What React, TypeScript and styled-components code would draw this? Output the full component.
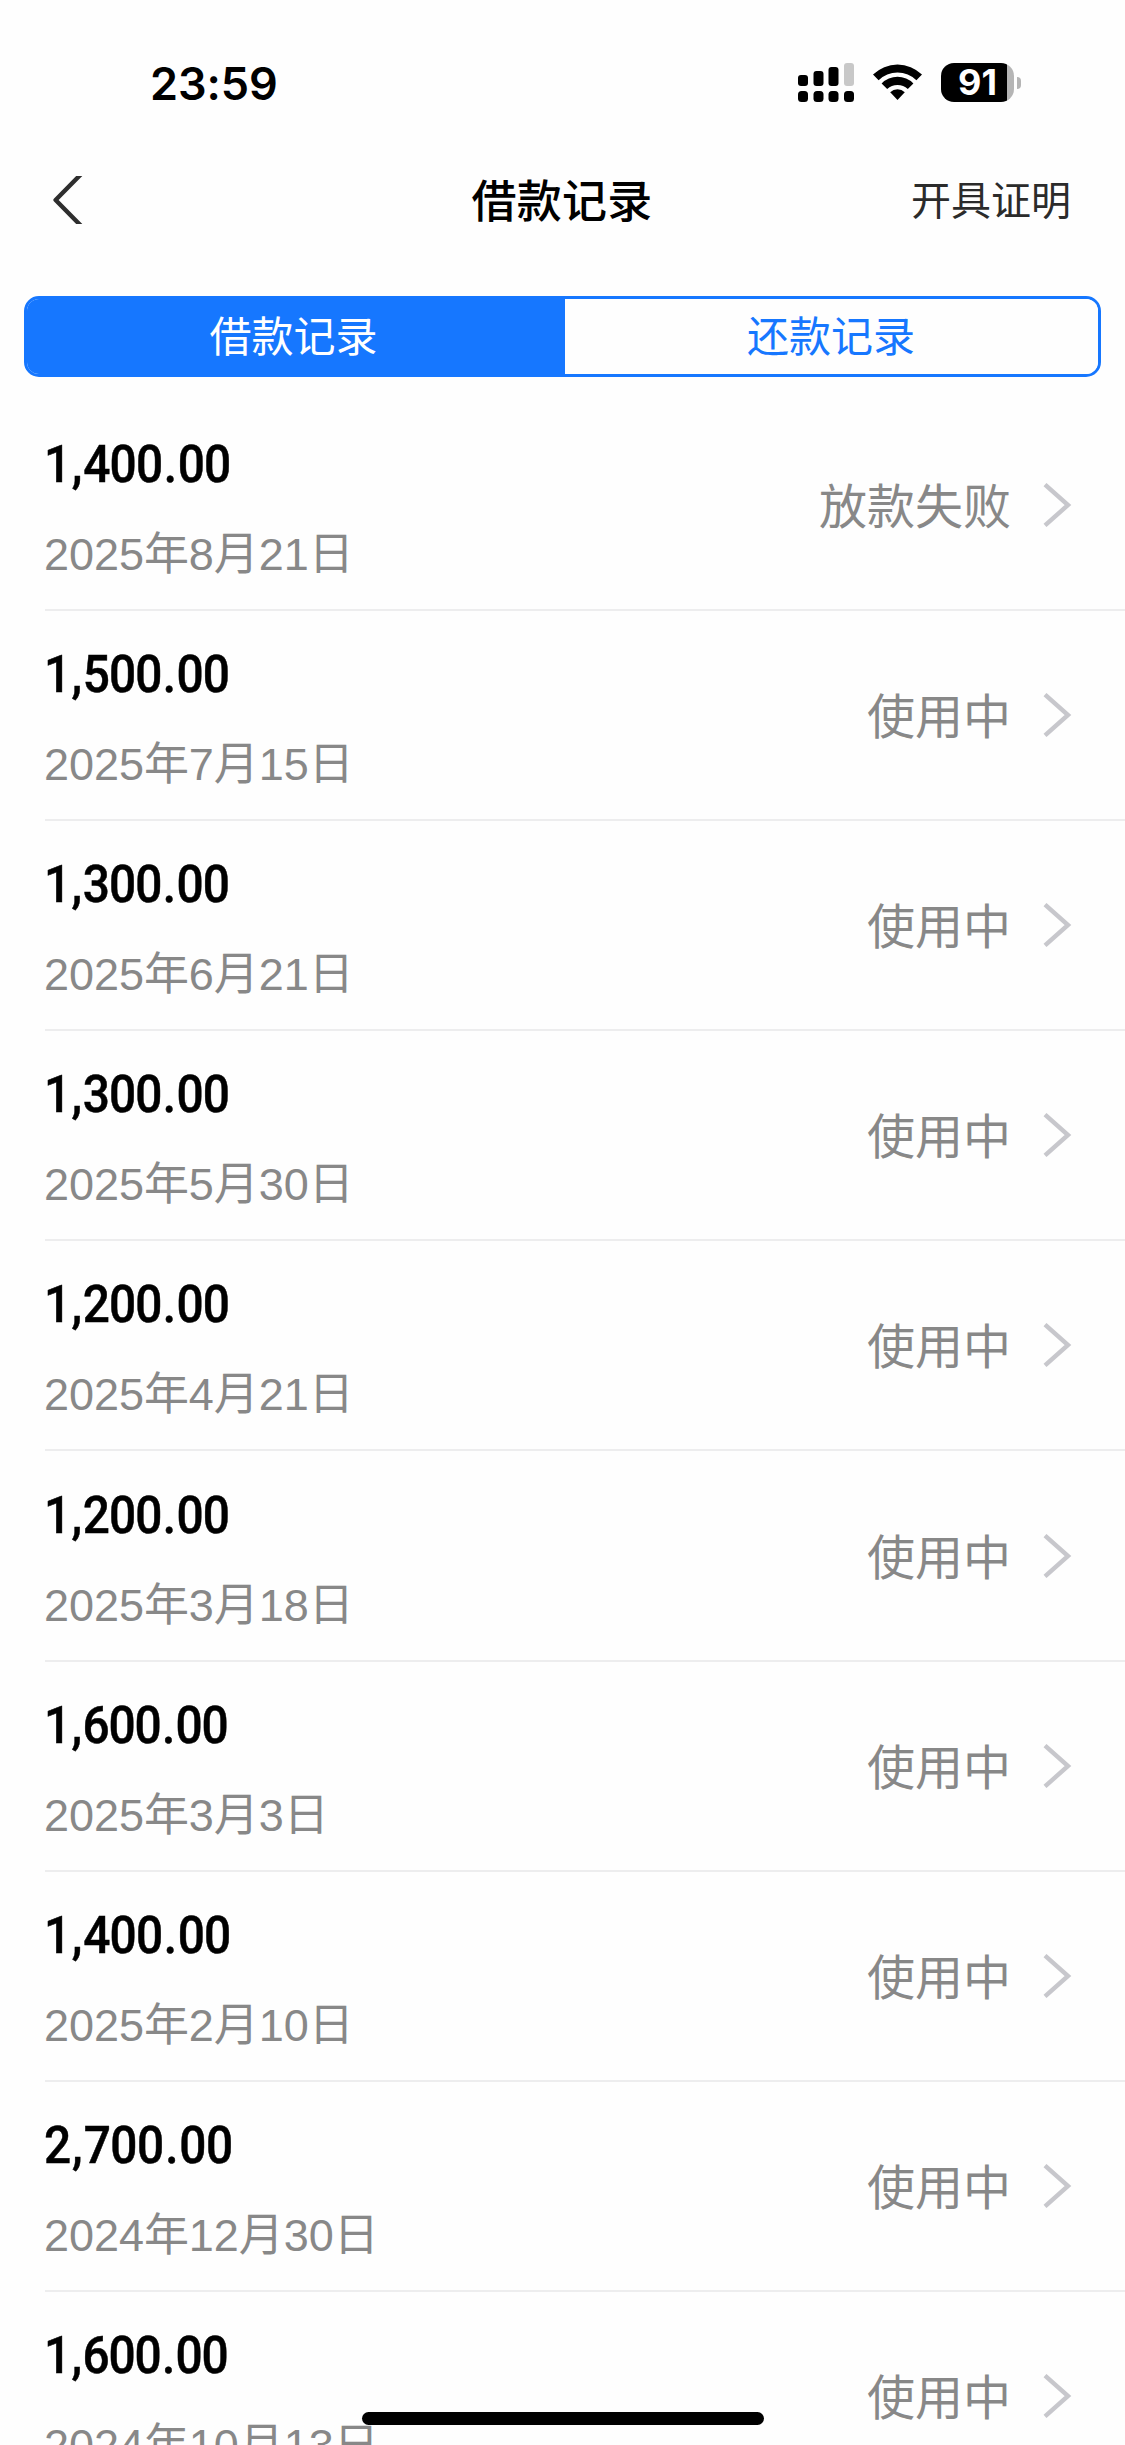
import React from "react";
import styled, { createGlobalStyle } from "styled-components";

const sans = `"Liberation Sans", "Noto Sans CJK SC", sans-serif`;
const cjk = `"Noto Sans CJK SC", sans-serif`;
const blue = "#1677ff";

const GlobalStyle = createGlobalStyle`
  * { box-sizing: border-box; }
  body { margin: 0; background: #fefefe; }
`;

const Screen = styled.main`
  width: 1125px;
  height: 2445px;
  overflow: hidden;
  background: #fefefe;
  position: relative;
  display: flex;
  flex-direction: column;
  font-family: ${sans};
`;

const StatusBar = styled.header`
  height: 140px;
  flex: none;
  display: flex;
  justify-content: space-between;
  align-items: flex-start;
  padding: 56px 104px 0 150px;
`;

const Clock = styled.time`
  font: 600 45px/56px Inter, sans-serif;
  letter-spacing: -0.1px;
  color: #000;
`;

const StatusIcons = styled.div`
  display: flex;
  align-items: flex-start;
  padding-top: 7px;
`;

const SignalIcon = styled.svg`
  width: 56px;
  height: 40px;
  margin-right: 19px;
`;

const WifiIcon = styled.svg`
  width: 49px;
  height: 40px;
  margin-right: 19px;
`;

const Battery = styled.div`
  display: flex;
  align-items: center;
`;

const BatteryBody = styled.div`
  width: 73px;
  height: 39px;
  border-radius: 13px;
  background: linear-gradient(to right, #000 66px, #b5b5b5 66px);
  color: #fff;
  font: 700 36px/39px Inter, sans-serif;
  text-align: center;
`;

const BatteryCap = styled.span`
  width: 4px;
  height: 12px;
  margin-left: 3px;
  border-radius: 0 5px 5px 0;
  background: #b5b5b5;
`;

const NavBar = styled.nav`
  height: 120px;
  flex: none;
  display: grid;
  grid-template-columns: 1fr auto 1fr;
  align-items: center;
  padding: 0 54px 0 53px;
  font-family: ${cjk};
`;

const BackIcon = styled.svg`
  width: 30px;
  height: 48px;
`;

const Title = styled.h1`
  margin: 0;
  padding-bottom: 3px;
  font-size: 45px;
  line-height: 60px;
  font-weight: 500;
  letter-spacing: 0.2px;
  color: #000;
`;

const NavAction = styled.span`
  justify-self: end;
  padding-bottom: 4px;
  font-size: 40px;
  line-height: 60px;
  color: #2b2b2b;
`;

const Segments = styled.div`
  height: 81px;
  flex: none;
  margin: 35.5px 24px 0;
  display: flex;
  border: 3px solid ${blue};
  border-radius: 15px;
  overflow: hidden;
`;

const Segment = styled.button<{ $active?: boolean }>`
  flex: ${(p) => (p.$active ? "0 0 538px" : "1")};
  border: 0;
  padding: ${(p) => (p.$active ? "0 5px 4px 0" : "0 1px 4px 0")};
  font-family: ${cjk};
  font-size: 42px;
  line-height: 60px;
  background: ${(p) => (p.$active ? blue : "#fefefe")};
  color: ${(p) => (p.$active ? "#fff" : blue)};
`;

const List = styled.ul`
  list-style: none;
  margin: 24.5px 0 0;
  padding: 0 0 0 45px;
`;

const Row = styled.li`
  height: 210.1px;
  padding-right: 53px;
  display: flex;
  align-items: center;
  border-bottom: 2px solid #ededee;
`;

const Info = styled.div`
  flex: 1;
  display: flex;
  flex-direction: column;
  gap: 31px;
  padding-top: 9px;
  margin-left: -1px;
`;

const Amount = styled.span<{ $spacing: number }>`
  font: 500 52.5px/60px Roboto, sans-serif;
  letter-spacing: ${(p) => p.$spacing}px;
  color: #000;
  -webkit-text-stroke: 0.5px #000;
  transform: scaleX(0.91);
  transform-origin: left;
`;

const Mark = styled.span`
  margin: 0 1.5px;
`;

const DateText = styled.span`
  font-size: 45px;
  line-height: 60px;
  letter-spacing: -0.05px;
  color: #888;
`;

const State = styled.span`
  font-family: ${cjk};
  font-size: 48px;
  line-height: 60px;
  color: #888;
  margin-right: 32px;
  padding-bottom: 4px;
`;

const ChevronIcon = styled.svg`
  width: 29px;
  height: 44px;
`;

const HomeIndicator = styled.div`
  position: absolute;
  left: 362px;
  top: 2412px;
  width: 402px;
  height: 13px;
  border-radius: 7px;
  background: #000;
`;

const USING = "使用中";

const records = [
  { amount: "1,400.00", date: "2025年8月21日", state: "放款失败", spacing: -0.8 },
  { amount: "1,500.00", date: "2025年7月15日", state: USING, spacing: -1 },
  { amount: "1,300.00", date: "2025年6月21日", state: USING, spacing: -1 },
  { amount: "1,300.00", date: "2025年5月30日", state: USING, spacing: -1 },
  { amount: "1,200.00", date: "2025年4月21日", state: USING, spacing: -1 },
  { amount: "1,200.00", date: "2025年3月18日", state: USING, spacing: -1 },
  { amount: "1,600.00", date: "2025年3月3日", state: USING, spacing: -1.2 },
  { amount: "1,400.00", date: "2025年2月10日", state: USING, spacing: -0.8 },
  { amount: "2,700.00", date: "2024年12月30日", state: USING, spacing: -0.5 },
  { amount: "1,600.00", date: "2024年10月13日", state: USING, spacing: -1.2 },
];

const Signal = () => (
  <SignalIcon viewBox="0 0 56 40">
    <rect x="0" y="12" width="10" height="11" rx="3" />
    <rect x="15.5" y="8" width="10" height="15" rx="3" />
    <rect x="30.5" y="4" width="10" height="19" rx="3" />
    <rect x="46" y="0" width="10" height="23" rx="3" fill="#c8c8c8" />
    {[0, 15.5, 30.5, 46].map((x) => (
      <rect key={x} x={x} y="28" width="10" height="11" rx="3.5" />
    ))}
  </SignalIcon>
);

const Wifi = () => (
  <WifiIcon viewBox="0 0 49 40">
    <path d="M0 11.6 A35 35 0 0 1 49 11.6 L43.4 17.3 A27 27 0 0 0 5.6 17.3 Z" />
    <path d="M8.6 20.4 A22.6 22.6 0 0 1 40.4 20.4 L34.8 26.1 A14.8 14.8 0 0 0 14.2 26.1 Z" />
    <path d="M17.2 29.2 A10.4 10.4 0 0 1 31.8 29.2 L24.5 37 Z" />
  </WifiIcon>
);

const Chevron = () => (
  <ChevronIcon viewBox="0 0 29 44" fill="none" stroke="#c7c7cc" strokeWidth="4.4">
    <path d="M2 1.6 L25 22 L2 42.4" />
  </ChevronIcon>
);

const Money = ({ value, spacing }: { value: string; spacing: number }) => (
  <Amount $spacing={spacing}>
    {value.split(/([,.])/).map((part, i) =>
      i % 2 ? <Mark key={i}>{part}</Mark> : part
    )}
  </Amount>
);

export default function App() {
  return (
    <>
      <GlobalStyle />
      <Screen>
        <StatusBar>
          <Clock>23:59</Clock>
          <StatusIcons>
            <Signal />
            <Wifi />
            <Battery>
              <BatteryBody>91</BatteryBody>
              <BatteryCap />
            </Battery>
          </StatusIcons>
        </StatusBar>
        <NavBar>
          <BackIcon viewBox="0 0 30 48" fill="none" stroke="#2e2e2e" strokeWidth="4.4">
            <path d="M28.2 -2 L2.6 24 L28.2 50" strokeLinejoin="round" />
          </BackIcon>
          <Title>借款记录</Title>
          <NavAction>开具证明</NavAction>
        </NavBar>
        <Segments>
          <Segment $active>借款记录</Segment>
          <Segment>还款记录</Segment>
        </Segments>
        <List>
          {records.map((r) => (
            <Row key={r.date}>
              <Info>
                <Money value={r.amount} spacing={r.spacing} />
                <DateText>{r.date}</DateText>
              </Info>
              <State>{r.state}</State>
              <Chevron />
            </Row>
          ))}
        </List>
        <HomeIndicator />
      </Screen>
    </>
  );
}
